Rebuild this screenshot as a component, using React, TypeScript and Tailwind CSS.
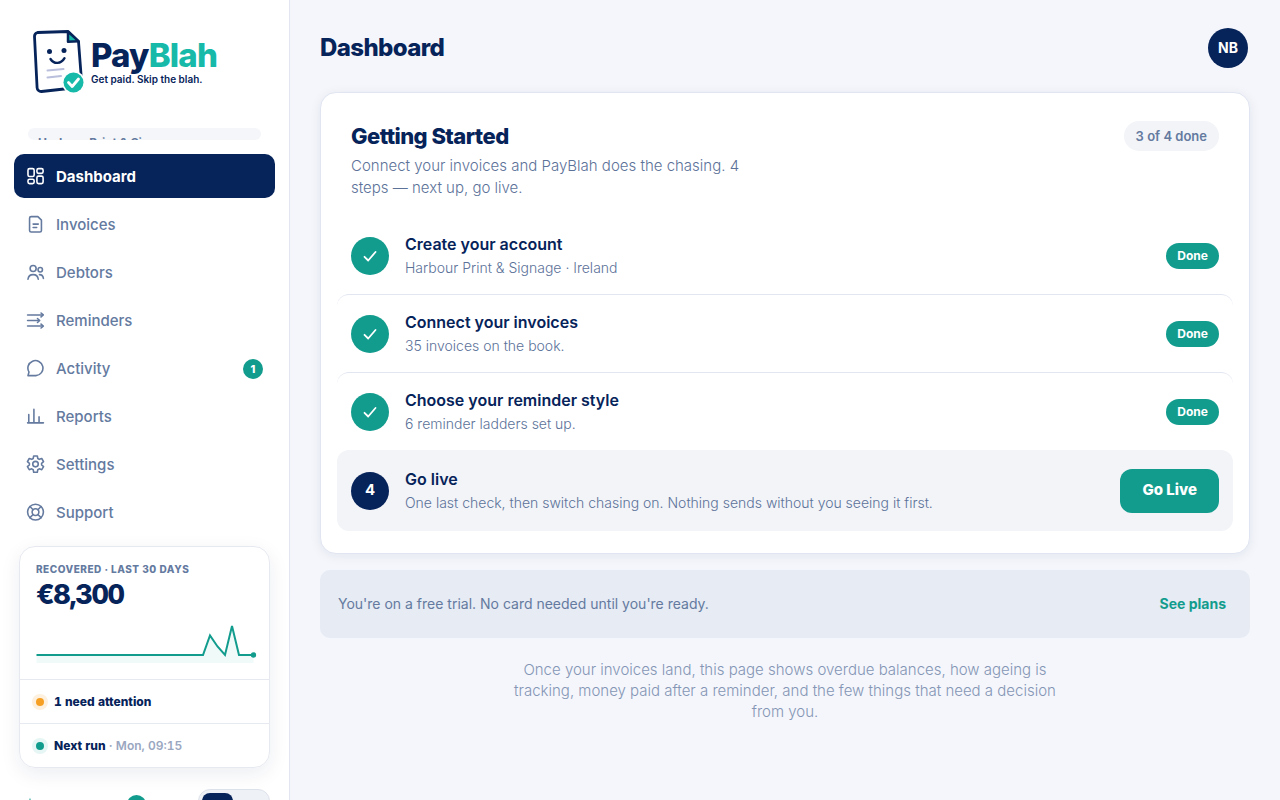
import type { ReactNode } from "react";

const stroke = {
  fill: "none",
  stroke: "currentColor",
  strokeWidth: 2,
  strokeLinecap: "round" as const,
  strokeLinejoin: "round" as const,
};

function Icon({ children }: { children: ReactNode }) {
  return (
    <svg viewBox="0 0 24 24" className="size-[19px] shrink-0" aria-hidden="true" {...stroke}>
      {children}
    </svg>
  );
}

const navItems: { label: string; icon: ReactNode; badge?: number }[] = [
  {
    label: "Dashboard",
    icon: (
      <>
        <rect x="2.5" y="2" width="7.8" height="10" rx="2" />
        <rect x="13.8" y="2" width="7.8" height="6" rx="2" />
        <rect x="2.5" y="15.5" width="7.8" height="5.5" rx="2" />
        <rect x="13.8" y="11.5" width="7.8" height="9.5" rx="2" />
      </>
    ),
  },
  {
    label: "Invoices",
    icon: (
      <>
        <path d="M6.500 2H15l4.500 4.500V19.500a2 2 0 0 1-2 2h-11a2 2 0 0 1-2-2V4a2 2 0 0 1 2-2z" />
        <path d="M9 11.500h6.500M9 15.800h4.500" />
      </>
    ),
  },
  {
    label: "Debtors",
    icon: (
      <>
        <circle cx="9" cy="7" r="3.800" />
        <circle cx="18" cy="8.500" r="2.800" />
        <path d="M2.500 20.500c.5-4 3-5.800 6.500-5.800s6 1.800 6.500 5.800M17 14.700c2.700 0 4.500 1.500 5 4.800" />
      </>
    ),
  },
  {
    label: "Reminders",
    icon: (
      <>
        <path d="M2 5h19M2 12h14M2 19h19" />
        <path d="m19 2.500 2.800 2.500L19 7.500M14.500 9.500l2.800 2.500-2.800 2.500M19 16.500l2.800 2.500-2.800 2.500" />
      </>
    ),
  },
  {
    label: "Activity",
    icon: <path d="M2.500 21 3.800 16.500A9.500 9.500 0 1 1 12.500 21z" />,
    badge: 1,
  },
  {
    label: "Reports",
    icon: <path d="M2 20h20M3.500 19.500V9.500M10 19.500V3M16.500 19.500v-7" />,
  },
  {
    label: "Settings",
    icon: (
      <>
        <circle cx="12" cy="11.500" r="3.500" />
        <path
          d="M9.700 2.200h4.600l.6 3.200 1.900 1.100 3.100-1.100 2.300 4-2.500 2.100v2l2.500 2.100-2.300 4-3.100-1.100-1.900 1.100-.6 3.200H9.700l-.6-3.200-1.900-1.100-3.100 1.100-2.300-4 2.500-2.100v-2L1.800 9.400l2.300-4 3.100 1.100 1.900-1.100z"
          transform="translate(0 -1)"
        />
      </>
    ),
  },
  {
    label: "Support",
    icon: (
      <>
        <circle cx="12" cy="11.500" r="10" />
        <circle cx="12" cy="11.500" r="4.300" />
        <path d="m5 4.500 4 4M19 4.500l-4 4M5 18.500l4-4M19 18.500l-4-4" />
      </>
    ),
  },
];

function Logo() {
  return (
    <a href="#home" className="flex shrink-0 items-center gap-1.5 pl-4" aria-label="PayBlah">
      <svg viewBox="-2 -1 55 66" className="h-[66px] w-[55px] shrink-0 overflow-visible" aria-hidden="true">
        <path
          d="M5.500 3.500 36 2.500 46.500 12.500 50 58 9.500 62.500a4 4 0 0 1-4.400-3.800L2.500 7.500a4 4 0 0 1 3-4z"
          fill="#fff"
          stroke="#06235a"
          strokeWidth="2.800"
          strokeLinejoin="round"
        />
        <path d="M36 2.500v10.300l10.700-.5z" fill="#17b9a9" stroke="#06235a" strokeWidth="2.500" strokeLinejoin="round" />
        <circle cx="17.500" cy="22.500" r="2.500" fill="#06235a" />
        <circle cx="32" cy="21.500" r="2.500" fill="#06235a" />
        <path d="M18.500 30c3.500 5.500 10.500 5.200 14-.8" fill="none" stroke="#06235a" strokeWidth="2.400" strokeLinecap="round" />
        <path d="m15.500 41.500 16-1.500M15.500 48.500l13.500-1.500" stroke="#b9bfdc" strokeWidth="2" strokeLinecap="round" />
        <circle cx="41.500" cy="53.500" r="11.500" fill="#fff" />
        <circle cx="41.500" cy="53.500" r="10" fill="#17b9a9" />
        <path d="m36.500 53.500 3.700 4 6.300-7.500" fill="none" stroke="#fff" strokeWidth="2.800" strokeLinecap="round" strokeLinejoin="round" />
      </svg>
      <span className="flex flex-col">
        <span className="text-[33px] leading-9 font-extrabold tracking-tight text-[#06235a]">
          Pay<span className="text-[#17b9a9]">Blah</span>
        </span>
        <span className="text-[10px] leading-3 font-semibold text-[#06235a]">Get paid. Skip the blah.</span>
      </span>
    </a>
  );
}

function Sidebar() {
  return (
    <aside className="flex w-[290px] shrink-0 flex-col overflow-hidden border-r border-[#e3e6f0] bg-white px-3.5 pt-7">
      <Logo />
      <div className="mx-3.5 mt-[34px] h-3 shrink-0 overflow-hidden rounded-md bg-[#f4f6fa] px-2.5 pt-[7px] text-xs leading-4 font-bold text-[#647a9f]">
        Harbour Print &amp; Signage
      </div>
      <nav className="mt-3.5 flex shrink-0 flex-col gap-1">
        {navItems.map(({ label, icon, badge }, i) => (
          <a
            key={label}
            href={"#" + label.toLowerCase()}
            className={
              i === 0
                ? "flex h-11 items-center gap-[11px] rounded-[10px] bg-[#06235a] px-3 pt-px text-[15px] leading-6 font-bold text-white"
                : "flex h-11 items-center gap-[11px] rounded-[10px] px-3 pt-px text-[15px] leading-6 font-medium text-[#647a9f]"
            }
          >
            <Icon>{icon}</Icon>
            {label}
            {badge && (
              <span className="ml-auto flex size-5 items-center justify-center rounded-full bg-[#129c8d] text-[11px] font-extrabold text-white">
                {badge}
              </span>
            )}
          </a>
        ))}
      </nav>
      <section className="mx-[5px] mt-3 shrink-0 rounded-2xl border border-[#e6e9f0] text-xs shadow-[0_6px_20px_rgba(6,35,90,0.08)]">
        <div className="px-4 pt-[15px] pb-4">
          <h2 className="text-[10px] leading-[14px] font-extrabold tracking-wider text-[#647a9f]">RECOVERED · LAST 30 DAYS</h2>
          <p className="mt-1 text-[27px] leading-[30px] font-extrabold tracking-tighter text-[#06235a] tabular-nums">€8,300</p>
          <svg viewBox="0 0 216 44" className="mt-[9px] h-11 w-full overflow-visible" aria-hidden="true">
            <path d="M0 36H166.500L173.500 16.500 181 27.500 188.500 36 195.500 7 202.500 36H217V44H0z" fill="#f0faf9" />
            <path d="M0 36H166.500L173.500 16.500 181 27.500 188.500 36 195.500 7 202.500 36H217" fill="none" stroke="#129c8d" strokeWidth="2" />
            <circle cx="217" cy="36" r="2.700" fill="#129c8d" />
          </svg>
        </div>
        <div className="flex h-11 items-center gap-2.5 border-t border-[#e6e9f0] px-4 font-extrabold text-[#06235a] tabular-nums">
          <span className="size-2 rounded-full bg-[#f5a024] ring-4 ring-[#fdf0de]" />
          <span>1 need attention</span>
        </div>
        <div className="flex h-11 items-center gap-2.5 border-t border-[#e6e9f0] px-4 font-extrabold text-[#06235a] tabular-nums">
          <span className="size-2 rounded-full bg-[#129c8d] ring-4 ring-[#e5f6f4]" />
          <span>
            Next run <span className="font-semibold text-[#9aa7bf]">· Mon, 09:15</span>
          </span>
        </div>
      </section>
      <div className="mx-[5px] mt-[21px] flex shrink-0 items-start">
        <svg viewBox="0 0 24 24" className="mt-2 ml-[3px] size-4 text-[#129c8d]" aria-hidden="true">
          <path d="M12 1 14.500 9.500 22 12 14.500 14.500 12 23 9.500 14.500 2 12 9.500 9.500z" fill="currentColor" />
        </svg>
        <span className="mt-1.5 ml-[89px] size-[19px] rounded-full bg-[#129c8d]" />
        <button
          type="button"
          aria-label="Switch mode"
          className="ml-auto flex h-10 w-[72px] rounded-xl border border-[#dde1ea] bg-[#eef1f6] p-[3px]"
        >
          <span className="h-8 w-[31px] rounded-lg bg-[#06235a]" />
        </button>
      </div>
    </aside>
  );
}

const steps = [
  { title: "Create your account", text: "Harbour Print & Signage · Ireland" },
  { title: "Connect your invoices", text: "35 invoices on the book." },
  { title: "Choose your reminder style", text: "6 reminder ladders set up." },
];

function StepText({ title, text }: { title: string; text: string }) {
  return (
    <div className="grow">
      <h3 className="text-base leading-[22px] font-semibold">{title}</h3>
      <p className="mt-0.5 text-sm leading-[21px] font-light text-[#5c7299]">{text}</p>
    </div>
  );
}

export default function App() {
  return (
    <div className="flex h-screen overflow-hidden bg-[#f4f6fb] font-['Inter','Liberation_Sans',sans-serif] text-[#06235a]">
      <Sidebar />
      <main className="flex min-w-0 grow flex-col overflow-auto px-[30px] pt-7">
        <header className="flex items-center justify-between pr-0.5">
          <h1 className="text-2xl font-extrabold tracking-tight">Dashboard</h1>
          <button type="button" className="flex size-10 items-center justify-center rounded-full bg-[#06235a] text-sm font-bold text-white">
            NB
          </button>
        </header>

        <section className="mt-6 rounded-2xl border border-[#e0e5f1] bg-white px-4 pt-7 pb-[22px] shadow-[0_2px_12px_rgba(6,35,90,0.07)]">
          <div className="flex items-start justify-between px-3.5">
            <div className="max-w-[420px]">
              <h2 className="text-[22px] leading-[30px] font-extrabold tracking-tight">Getting Started</h2>
              <p className="mt-1 text-[15px] leading-[22px] font-light text-[#5c7299]">
                Connect your invoices and PayBlah does the chasing. 4 steps — next up, go live.
              </p>
            </div>
            <span className="rounded-full bg-[#f2f4f8] px-3 py-[7px] text-[13px] leading-4 font-semibold text-[#647a9f]">3 of 4 done</span>
          </div>
          <ol className="mt-[18px]">
            {steps.map((s, i) => (
              <li
                key={s.title}
                className={
                  i === 0
                    ? "flex items-center gap-4 rounded-xl px-3.5 py-4"
                    : "flex items-center gap-4 rounded-xl border-t border-[#e2e6f1] px-3.5 py-4"
                }
              >
                <span className="flex size-[38px] shrink-0 items-center justify-center rounded-full bg-[#129c8d] text-white">
                  <svg viewBox="0 0 18 18" className="size-[18px]" aria-hidden="true" {...stroke} strokeWidth={1.8}>
                    <path d="m3.500 9.800 3.700 3.700 7.300-8.500" />
                  </svg>
                </span>
                <StepText title={s.title} text={s.text} />
                <span className="rounded-full bg-[#129c8d] px-[11px] py-[5px] text-xs leading-4 font-bold text-white">Done</span>
              </li>
            ))}
            <li className="flex items-center gap-4 rounded-xl bg-[#f2f4f8] px-3.5 py-[18px]">
              <span className="flex size-[38px] shrink-0 items-center justify-center rounded-full bg-[#06235a] text-[15px] font-bold text-white">
                4
              </span>
              <StepText title="Go live" text="One last check, then switch chasing on. Nothing sends without you seeing it first." />
              <button type="button" className="h-11 rounded-xl bg-[#129c8d] px-[22px] text-[15px] font-extrabold text-white">
                Go Live
              </button>
            </li>
          </ol>
        </section>

        <div className="mt-4 flex h-[68px] shrink-0 items-center justify-between rounded-[10px] bg-[#e6ebf4] pr-6 pl-[18px] text-sm">
          <p className="text-[#647a9f]">You're on a free trial. No card needed until you're ready.</p>
          <a href="#plans" className="font-bold text-[#129c8d]">
            See plans
          </a>
        </div>

        <p className="mx-auto mt-[21px] max-w-[560px] text-center text-[15px] leading-[21px] font-light text-[#8495b5]">
          Once your invoices land, this page shows overdue balances, how ageing is tracking, money paid after a reminder, and the few things that need a
          decision from you.
        </p>
      </main>
    </div>
  );
}
